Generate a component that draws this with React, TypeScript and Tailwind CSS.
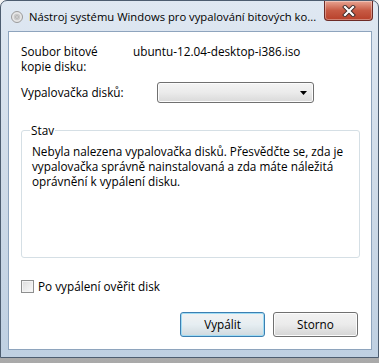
import React from 'react';

const font = { fontFamily: '"Open Sans", "Noto Sans", sans-serif' };

const TitleIcon: React.FC = () => (
  <svg width="12" height="12" viewBox="0 0 12 12" className="shrink-0">
    <circle cx="6" cy="6" r="5.5" fill="#e6e6e6" stroke="#9a9a9a" strokeWidth="1" />
    <circle cx="6" cy="6" r="3.2" fill="#c9c9c9" />
    <circle cx="6" cy="6" r="1.2" fill="#ffffff" stroke="#8a8a8a" strokeWidth="0.6" />
  </svg>
);

const CloseButton: React.FC = () => (
  <div className="ml-auto mr-[5px] flex h-[20px] w-[49px] shrink-0 items-center justify-center rounded-b-[4px] border border-t-0 border-[#6d2b26] bg-gradient-to-b from-[#e8a493] via-[#c75a44] to-[#b8402a] shadow-[inset_0_0_0_1px_rgba(255,255,255,0.35)]">
    <svg width="14" height="12" viewBox="0 0 14 12">
      <path d="M3 2 L11 10 M11 2 L3 10" stroke="#3a2a2a" strokeWidth="4" strokeLinecap="square" />
      <path d="M3 2 L11 10 M11 2 L3 10" stroke="#ffffff" strokeWidth="2.2" strokeLinecap="square" />
    </svg>
  </div>
);

const App: React.FC = () => {
  return (
    <div className="h-[363px] w-[379px] bg-gradient-to-b from-[#f4f4f4] to-[#a9a9a9]" style={font}>
      <div className="flex h-[358px] w-[379px] flex-col rounded-t-[7px] border border-[#4d5d70] bg-gradient-to-b from-[#dfe8f2] via-[#cfdbe8] to-[#bfd0e2]">
        {/* titulek */}
        <div className="flex h-[30px] items-start">
          <div className="flex min-w-0 items-center gap-[6px] pl-[10px] pt-[8px]">
            <TitleIcon />
            <span className="whitespace-nowrap text-[11.25px] leading-[15px] text-black">
              Nástroj systému Windows pro vypalování bitových ko...
            </span>
          </div>
          <CloseButton />
        </div>

        {/* obsah */}
        <div className="ml-[7px] mr-[6px] flex h-[319px] flex-col border border-[#8ea4bd] bg-white px-[12px] text-[11.75px] leading-[15px] text-black">
          <div className="mt-[12px] flex">
            <div className="w-[112px]">
              Soubor bitové
              <br />
              kopie disku:
            </div>
            <div>ubuntu-12.04-desktop-i386.iso</div>
          </div>

          <div className="mt-[8px] flex items-center">
            <div className="w-[136px]">Vypalovačka disků:</div>
            <div className="flex h-[21px] w-[157px] items-center justify-end rounded-[3px] border border-[#707070] bg-gradient-to-b from-[#f4f4f4] via-[#ebebeb] to-[#d9d9d9] pr-[6px] shadow-[inset_0_0_0_1px_#fcfcfc]">
              <svg width="7" height="4" viewBox="0 0 7 4">
                <path d="M0 0 H7 L3.5 4 Z" fill="#000" />
              </svg>
            </div>
          </div>

          {/* skupina Stav */}
          <div className="relative mt-[27px] h-[128px] w-[339px] rounded-[3px] border border-[#d5dfe5] pl-[10px] pr-[6px] pt-[13px]">
            <span className="absolute left-[8px] top-[-8px] bg-white px-[1px] leading-[15px]">Stav</span>
            <p>
              Nebyla nalezena vypalovačka disků. Přesvědčte se, zda je vypalovačka správně nainstalovaná a zda máte náležitá oprávnění k vypálení disku.
            </p>
          </div>

          <label className="mt-[21px] flex items-center gap-[4px]">
            <span className="h-[13px] w-[13px] border border-[#8e8f8f] bg-gradient-to-br from-[#dcdcdc] to-[#fbfbfb] shadow-[inset_0_0_0_1px_#f4f4f4]" />
            <span>Po vypálení ověřit disk</span>
          </label>

          <div className="mt-[18px] flex justify-end gap-[8px] pr-[1px]">
            <button className="h-[25px] w-[85px] rounded-[3px] border border-[#3c7fb1] bg-gradient-to-b from-[#f2f2f2] via-[#e6eef2] to-[#cfd9de] shadow-[inset_0_0_0_1px_#9fdcf4]">
              Vypálit
            </button>
            <button className="h-[25px] w-[85px] rounded-[3px] border border-[#707070] bg-gradient-to-b from-[#f2f2f2] via-[#ebebeb] to-[#d5d5d5] shadow-[inset_0_0_0_1px_#fcfcfc]">
              Storno
            </button>
          </div>
        </div>
      </div>
    </div>
  );
};

export default App;
